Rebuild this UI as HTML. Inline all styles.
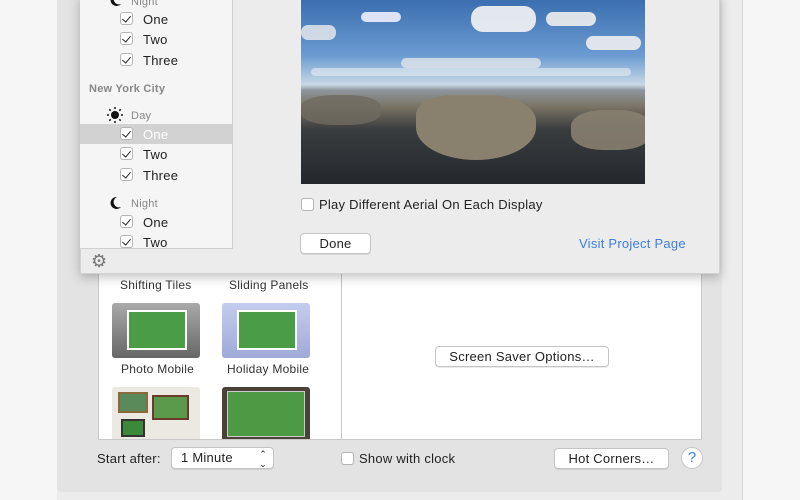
<!DOCTYPE html>
<html><head><style>
*{margin:0;padding:0;box-sizing:border-box}
body{width:800px;height:500px;overflow:hidden;background:#f6f6f6;font-family:"Liberation Sans",sans-serif;position:relative;color:#222}
.abs{position:absolute}
.cb{position:absolute;width:13px;height:13px;border:1px solid #b5b5b5;border-radius:3px;background:#fff}
.cb.c::after{content:"";position:absolute;left:3px;top:1px;width:4px;height:7px;border-right:1.5px solid #222;border-bottom:1.5px solid #222;transform:rotate(40deg)}
.t{position:absolute;font-size:13px;white-space:nowrap;letter-spacing:.25px}
.btn{position:absolute;background:#fff;border:1px solid #c4c4c4;border-radius:4px;font-size:13px;letter-spacing:.25px;text-align:center;box-shadow:0 1px 0 rgba(0,0,0,.08)}
.moon{position:absolute;width:14px;height:14px}
</style></head><body>
<div class="abs" style="left:57px;top:0;width:686px;height:500px;background:#ececec;border-right:1px solid #d8d8d8"></div>
<div class="abs" style="left:57px;top:0;width:665px;height:492px;background:#e3e3e3;border-radius:0 0 4px 4px"></div>
<div class="abs" style="left:98px;top:270px;width:604px;height:170px;background:#fff;border:1px solid #c8c8c8"></div>
<div class="abs" style="left:341px;top:270px;width:1px;height:170px;background:#c8c8c8"></div>
<!-- thumbnails -->
<div class="t" style="left:120px;top:278px;font-size:12px;color:#333">Shifting Tiles</div>
<div class="t" style="left:229px;top:278px;font-size:12px;color:#333">Sliding Panels</div>
<div class="abs" style="left:112px;top:303px;width:88px;height:55px;border-radius:3px;background:linear-gradient(#aaa,#666)"><div class="abs" style="left:15px;top:7px;width:60px;height:40px;background:#4a9c46;border:2px solid #fff"></div></div>
<div class="abs" style="left:222px;top:303px;width:88px;height:55px;border-radius:3px;background:linear-gradient(#c4cdee,#9fa9d8)"><div class="abs" style="left:15px;top:7px;width:60px;height:40px;background:#4a9c46;border:2px solid #fff"></div></div>
<div class="t" style="left:121px;top:362px;font-size:12px;color:#333">Photo Mobile</div>
<div class="t" style="left:227px;top:362px;font-size:12px;color:#333">Holiday Mobile</div>
<div class="abs" style="left:112px;top:387px;width:88px;height:52px;border-radius:3px 3px 0 0;background:#ece8e2"><div class="abs" style="left:6px;top:5px;width:30px;height:21px;background:#5a8a5a;border:2px solid #8a6a3a"></div><div class="abs" style="left:40px;top:8px;width:37px;height:25px;background:#5a9a4a;border:2px solid #6a3a2a"></div><div class="abs" style="left:9px;top:32px;width:24px;height:18px;background:#3a8a3a;border:2px solid #333"></div></div>
<div class="abs" style="left:222px;top:387px;width:88px;height:52px;border-radius:3px 3px 0 0;background:#4a4238"><div class="abs" style="left:5px;top:4px;width:78px;height:46px;background:#4d9a45;border:1px solid #ccc"></div></div>
<div class="btn" style="left:435px;top:346px;width:174px;height:21px;line-height:19px">Screen Saver Options…</div>
<div class="t" style="left:97px;top:451px">Start after:</div>
<div class="btn" style="left:171px;top:447px;width:103px;height:22px;line-height:20px;text-align:left;padding-left:9px">1 Minute<span style="position:absolute;right:6px;top:0;font-size:9px;line-height:10px;padding-top:1px">⌃<br>⌄</span></div>
<div class="cb" style="left:341px;top:452px"></div>
<div class="t" style="left:359px;top:451px">Show with clock</div>
<div class="btn" style="left:554px;top:448px;width:115px;height:21px;line-height:19px">Hot Corners…</div>
<div class="abs" style="left:681px;top:447px;width:22px;height:22px;border-radius:50%;background:#fff;border:1px solid #c4c4c4;color:#3d7ee0;font-size:15px;text-align:center;line-height:20px">?</div>
<!-- sheet -->
<div class="abs" style="left:80px;top:-5px;width:640px;height:279px;background:#ececec;box-shadow:0 3px 10px rgba(0,0,0,.25);border:1px solid #d2d2d2"></div>
<div class="abs" style="left:80px;top:0;width:153px;height:249px;background:#f5f5f5;border-right:1px solid #d0d0d0;border-bottom:1px solid #d0d0d0;overflow:hidden">
 <div class="abs" style="left:0;top:124px;width:152px;height:20px;background:#d2d2d2"></div>
</div>
<svg class="moon" style="left:108px;top:-7px" viewBox="0 0 14 14"><path d="M9 1A6 6 0 1 0 13 11A5 5 0 0 1 9 1Z" fill="#111"/></svg>
<div class="t" style="left:131px;top:-4px;font-size:11px;color:#888">Night</div>
<div class="cb c" style="left:120px;top:12px"></div><div class="t" style="left:143px;top:12px">One</div>
<div class="cb c" style="left:120px;top:32px"></div><div class="t" style="left:143px;top:32px">Two</div>
<div class="cb c" style="left:120px;top:53px"></div><div class="t" style="left:143px;top:53px">Three</div>
<div class="t" style="left:89px;top:83px;font-size:11px;color:#888;font-weight:bold">New York City</div>
<svg class="abs" style="left:107px;top:107px" width="16" height="16" viewBox="0 0 16 16"><circle cx="8" cy="8" r="4" fill="#111"/><g stroke="#111" stroke-width="1.5"><path d="M8 0v2M8 14v2M0 8h2M14 8h2M2.3 2.3l1.4 1.4M12.3 12.3l1.4 1.4M2.3 13.7l1.4-1.4M12.3 3.7l1.4-1.4"/></g></svg>
<div class="t" style="left:131px;top:110px;font-size:11px;color:#888">Day</div>
<div class="cb c" style="left:120px;top:127px"></div><div class="t" style="left:143px;top:127px;color:#fff">One</div>
<div class="cb c" style="left:120px;top:147px"></div><div class="t" style="left:143px;top:147px">Two</div>
<div class="cb c" style="left:120px;top:168px"></div><div class="t" style="left:143px;top:168px">Three</div>
<svg class="moon" style="left:108px;top:196px" viewBox="0 0 14 14"><path d="M9 1A6 6 0 1 0 13 11A5 5 0 0 1 9 1Z" fill="#111"/></svg>
<div class="t" style="left:131px;top:198px;font-size:11px;color:#888">Night</div>
<div class="cb c" style="left:120px;top:215px"></div><div class="t" style="left:143px;top:215px">One</div>
<div class="cb c" style="left:120px;top:235px"></div><div class="t" style="left:143px;top:235px">Two</div>
<div class="t" style="left:91px;top:251px;font-size:18px;color:#777">⚙</div>
<!-- photo -->
<div class="abs" style="left:301px;top:0;width:344px;height:184px;overflow:hidden;background:linear-gradient(#3b6fb0 0%,#6a9ad0 30%,#c8d8e6 46%,#8e969c 49%,#7a7365 58%,#3a3d3f 70%,#24272c 100%)">
 <div class="abs" style="left:60px;top:12px;width:40px;height:10px;background:#eef;border-radius:6px;opacity:.9"></div>
 <div class="abs" style="left:170px;top:6px;width:65px;height:26px;background:#f4f4f4;border-radius:12px;opacity:.9"></div>
 <div class="abs" style="left:245px;top:12px;width:50px;height:14px;background:#eee;border-radius:8px;opacity:.9"></div>
 <div class="abs" style="left:285px;top:36px;width:55px;height:14px;background:#eee;border-radius:7px;opacity:.9"></div>
 <div class="abs" style="left:0;top:25px;width:35px;height:15px;background:#eee;border-radius:7px;opacity:.8"></div>
 <div class="abs" style="left:100px;top:58px;width:140px;height:10px;background:#eee;border-radius:5px;opacity:.7"></div>
 <div class="abs" style="left:10px;top:68px;width:320px;height:8px;background:#e8eef2;border-radius:4px;opacity:.6"></div>
 <div class="abs" style="left:115px;top:95px;width:120px;height:65px;background:#8a806e;border-radius:30% 40% 50% 50%"></div>
 <div class="abs" style="left:0;top:95px;width:80px;height:30px;background:#6f6a60;border-radius:40%;opacity:.8"></div>
 <div class="abs" style="left:270px;top:110px;width:80px;height:40px;background:#877f70;border-radius:40%;opacity:.9"></div>
</div>
<div class="cb" style="left:301px;top:198px"></div>
<div class="t" style="left:319px;top:197px">Play Different Aerial On Each Display</div>
<div class="btn" style="left:300px;top:233px;width:71px;height:21px;line-height:19px">Done</div>
<div class="t" style="left:579px;top:236px;color:#3d7ee0">Visit Project Page</div>
</body></html>
